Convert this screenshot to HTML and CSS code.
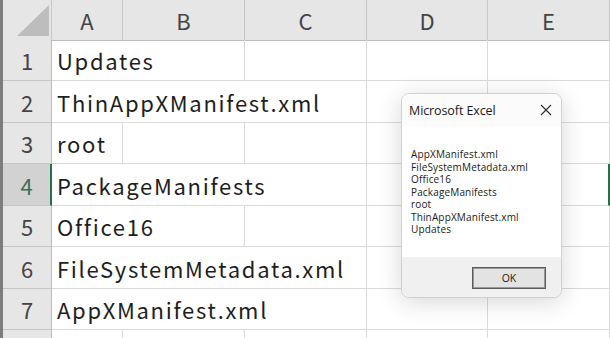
FILE: index.html
```html
<!DOCTYPE html>
<html>
<head>
<meta charset="utf-8">
<link rel="stylesheet" href="styles.css">
</head>
<body>
<div class="sheet">
  <div class="row head">
    <div class="corner"><svg width="49" height="40" viewBox="0 0 49 40"><polygon points="14,36 46,5 46,36" fill="#bdbdbd"/></svg></div>
    <div class="ch">A</div><div class="ch">B</div><div class="ch">C</div><div class="ch">D</div><div class="ch">E</div>
  </div>
  <div class="row r41">
    <div class="rh">1</div><div class="c span2">Updates</div><div class="c"></div><div class="c"></div><div class="c"></div>
  </div>
  <div class="row r42">
    <div class="rh">2</div><div class="c span3">ThinAppXManifest.xml</div><div class="c"></div><div class="c"></div>
  </div>
  <div class="row r41">
    <div class="rh">3</div><div class="c">root</div><div class="c"></div><div class="c"></div><div class="c"></div><div class="c"></div>
  </div>
  <div class="row r42">
    <div class="rh active">4</div><div class="c span3">PackageManifests</div><div class="c"></div><div class="c sel"></div>
  </div>
  <div class="row r41">
    <div class="rh">5</div><div class="c span2">Office16</div><div class="c"></div><div class="c"></div><div class="c"></div>
  </div>
  <div class="row r42">
    <div class="rh">6</div><div class="c span3">FileSystemMetadata.xml</div><div class="c"></div><div class="c"></div>
  </div>
  <div class="row r41">
    <div class="rh">7</div><div class="c span3">AppXManifest.xml</div><div class="c"></div><div class="c"></div>
  </div>
  <div class="row r42">
    <div class="rh"></div><div class="c"></div><div class="c"></div><div class="c"></div><div class="c"></div><div class="c"></div>
  </div>
</div>

<div class="dialog">
  <div class="dtitle">
    <span>Microsoft Excel</span>
    <svg class="close" width="12" height="12" viewBox="0 0 12 12"><path d="M1 1 L11 11 M11 1 L1 11" stroke="#333" stroke-width="1.2" fill="none"/></svg>
  </div>
  <div class="dbody">
    <div>AppXManifest.xml</div>
    <div>FileSystemMetadata.xml</div>
    <div>Office16</div>
    <div>PackageManifests</div>
    <div>root</div>
    <div>ThinAppXManifest.xml</div>
    <div>Updates</div>
  </div>
  <div class="dfoot">
    <div class="ok">OK</div>
  </div>
</div>
</body>
</html>
```
FILE: styles.css
```css
html, body {
  margin: 0;
  padding: 0;
  background: #ffffff;
  overflow: hidden;
}
body {
  width: 610px;
  height: 338px;
  position: relative;
}
.sheet {
  border-left: 3px solid #7d7d7d;
  height: 338px;
  overflow: hidden;
  box-sizing: border-box;
  font-family: "Noto Sans CJK JP", "Noto Sans", sans-serif;
}
.row {
  display: grid;
  grid-template-columns: 49px 71px 122px 122px 121px 122px;
}
.head { height: 40px; }
.r41 { height: 41px; }
.r42 { height: 42px; }
.corner {
  background: #e6e6e6;
  border-right: 1px solid #c6c6c6;
  border-bottom: 1px solid #bcbcbc;
  box-sizing: border-box;
}
.corner svg { display: block; }
.ch {
  background: #e6e6e6;
  border-right: 1px solid #c6c6c6;
  border-bottom: 1px solid #bcbcbc;
  box-sizing: border-box;
  color: #444;
  font-size: 22px;
  display: flex;
  align-items: center;
  justify-content: center;
}
.rh {
  background: #e6e6e6;
  border-right: 1px solid #bcbcbc;
  border-bottom: 1px solid #c6c6c6;
  box-sizing: border-box;
  color: #444;
  font-size: 22px;
  display: flex;
  align-items: center;
  justify-content: center;
}
.rh.active {
  background: #d2d2d2;
  color: #3f6f53;
  border-right: 2px solid #217346;
}
.c {
  border-right: 1px solid #dadada;
  border-bottom: 1px solid #dadada;
  box-sizing: border-box;
  font-size: 22px;
  color: #1e1e1e;
  padding-left: 5px;
  display: flex;
  align-items: center;
  white-space: nowrap;
  letter-spacing: 1.7px;
}
.span2 { grid-column: span 2; }
.span3 { grid-column: span 3; }
.sel { border-right: 2px solid #217346; }

.dialog {
  position: absolute;
  left: 401px;
  top: 93px;
  width: 161px;
  height: 205px;
  box-sizing: border-box;
  border: 1px solid #d0d0d0;
  border-radius: 8px;
  background: #ffffff;
  box-shadow: 0 4px 24px rgba(0, 0, 0, 0.16);
  overflow: hidden;
  font-family: "Open Sans", "Noto Sans", sans-serif;
  color: #1a1a1a;
  display: flex;
  flex-direction: column;
}
.dtitle {
  height: 32px;
  display: flex;
  align-items: center;
  justify-content: space-between;
  padding: 0 9px 0 7px;
  font-size: 12.5px;
  letter-spacing: -0.1px;
  background: #fbfbfb;
}
.close { display: block; }
.dbody {
  flex: 1;
  padding: 22px 0 0 9px;
  font-size: 10px;
  line-height: 12.5px;
  letter-spacing: 0.15px;
}
.dfoot {
  height: 40px;
  background: #f0f0f0;
  display: flex;
  align-items: center;
  justify-content: flex-end;
  padding-right: 15px;
}
.ok {
  width: 74px;
  height: 22px;
  box-sizing: border-box;
  border: 1px solid #5a5a5a;
  box-shadow: inset 0 0 0 1px #9a9a9a;
  background: #e3e3e3;
  font-size: 10.5px;
  display: flex;
  align-items: center;
  justify-content: center;
  margin-top: 2px;
}
```
